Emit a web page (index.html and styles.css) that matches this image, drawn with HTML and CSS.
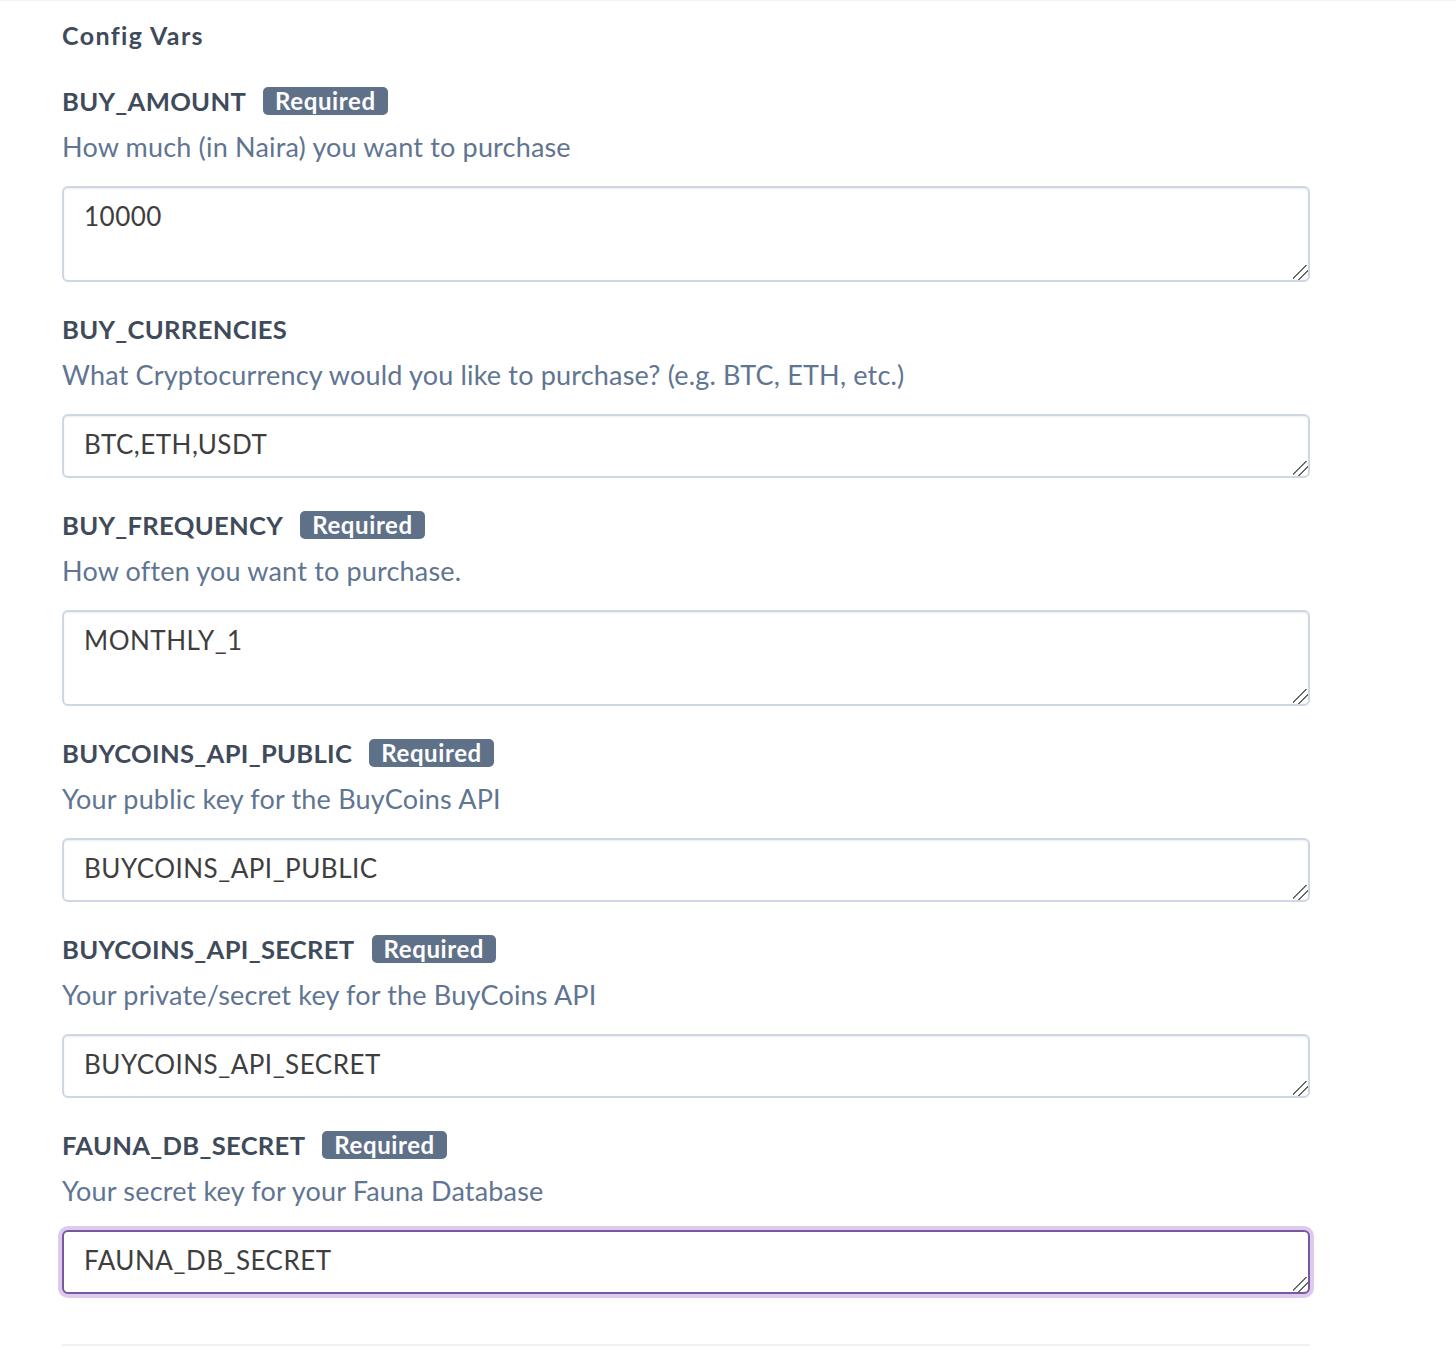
FILE: index.html
```html
<!DOCTYPE html>
<html lang="en">
<head>
<meta charset="utf-8">
<title>Config Vars</title>
<link rel="stylesheet" href="styles.css">
</head>
<body>
<div class="page">
  <h2 class="title">Config Vars</h2>
  <div class="fields">
    <div class="field">
      <div class="label-row"><span class="label">BUY_AMOUNT</span><span class="badge">Required</span></div>
      <p class="desc">How much (in Naira) you want to purchase</p>
      <textarea class="input tall">10000</textarea>
    </div>
    <div class="field">
      <div class="label-row"><span class="label">BUY_CURRENCIES</span></div>
      <p class="desc">What Cryptocurrency would you like to purchase? (e.g. BTC, ETH, etc.)</p>
      <textarea class="input short">BTC,ETH,USDT</textarea>
    </div>
    <div class="field">
      <div class="label-row"><span class="label">BUY_FREQUENCY</span><span class="badge">Required</span></div>
      <p class="desc">How often you want to purchase.</p>
      <textarea class="input tall">MONTHLY_1</textarea>
    </div>
    <div class="field">
      <div class="label-row"><span class="label">BUYCOINS_API_PUBLIC</span><span class="badge">Required</span></div>
      <p class="desc">Your public key for the BuyCoins API</p>
      <textarea class="input short">BUYCOINS_API_PUBLIC</textarea>
    </div>
    <div class="field">
      <div class="label-row"><span class="label">BUYCOINS_API_SECRET</span><span class="badge">Required</span></div>
      <p class="desc">Your private/secret key for the BuyCoins API</p>
      <textarea class="input short">BUYCOINS_API_SECRET</textarea>
    </div>
    <div class="field">
      <div class="label-row"><span class="label">FAUNA_DB_SECRET</span><span class="badge">Required</span></div>
      <p class="desc">Your secret key for your Fauna Database</p>
      <textarea class="input short focused">FAUNA_DB_SECRET</textarea>
    </div>
  </div>
  <hr class="divider">
</div>
</body>
</html>
```

FILE: styles.css
```css
html, body {
  margin: 0;
  padding: 0;
  background: #ffffff;
}

body {
  border-top: 1px solid #f4f4f4;
  font-family: Lato, "Open Sans", "Liberation Sans", sans-serif;
}

.page {
  width: 1248px;
  margin-left: 62px;
  padding-top: 19px;
}

.title {
  margin: 0;
  font-size: 25px;
  line-height: 30px;
  font-weight: 700;
  letter-spacing: 1.4px;
  color: #3f4b5b;
}

.fields {
  display: flex;
  flex-direction: column;
  gap: 32px;
  margin-top: 36px;
}

.field {
  display: flex;
  flex-direction: column;
}

.label-row {
  display: flex;
  align-items: center;
  gap: 17px;
  height: 30px;
}

.label {
  font-size: 25.6px;
  font-weight: 700;
  color: #3f4b5b;
  line-height: 30px;
  letter-spacing: 0.3px;
}

.badge {
  display: inline-block;
  height: 28px;
  line-height: 28px;
  padding: 0 12px;
  border-radius: 5px;
  background: #5f7089;
  color: #ffffff;
  font-size: 24px;
  font-weight: 700;
  letter-spacing: 0.6px;
}

.desc {
  margin: 13px 0 0;
  font-size: 27px;
  line-height: 36px;
  letter-spacing: 0.18px;
  color: #5f7592;
}

.input {
  display: block;
  box-sizing: border-box;
  width: 100%;
  margin-top: 21px;
  padding: 12px 20px;
  border: 2px solid #cfd7e6;
  border-radius: 6px;
  box-shadow: inset 0 1px 2px rgba(0, 0, 0, 0.08);
  font-family: Lato, "Open Sans", "Liberation Sans", sans-serif;
  font-size: 26px;
  line-height: 32px;
  letter-spacing: 0.5px;
  color: #3e3e3e;
  resize: vertical;
  outline: none;
  background: #ffffff;
}

.input::-webkit-scrollbar {
  width: 16px;
  height: 16px;
  background: transparent;
}

.input::-webkit-resizer {
  background: linear-gradient(135deg,
    transparent 0 41%,
    #666666 41% 47%,
    transparent 47% 65%,
    #666666 65% 71%,
    transparent 71%);
}

.input.tall {
  height: 96px;
}

.input.short {
  height: 64px;
}

.input.focused {
  border-color: #79589f;
  box-shadow: 0 0 0 4px #dccbec;
}

.divider {
  margin: 50px 0 0;
  border: 0;
  height: 2px;
  background: #eef1f6;
}
```
